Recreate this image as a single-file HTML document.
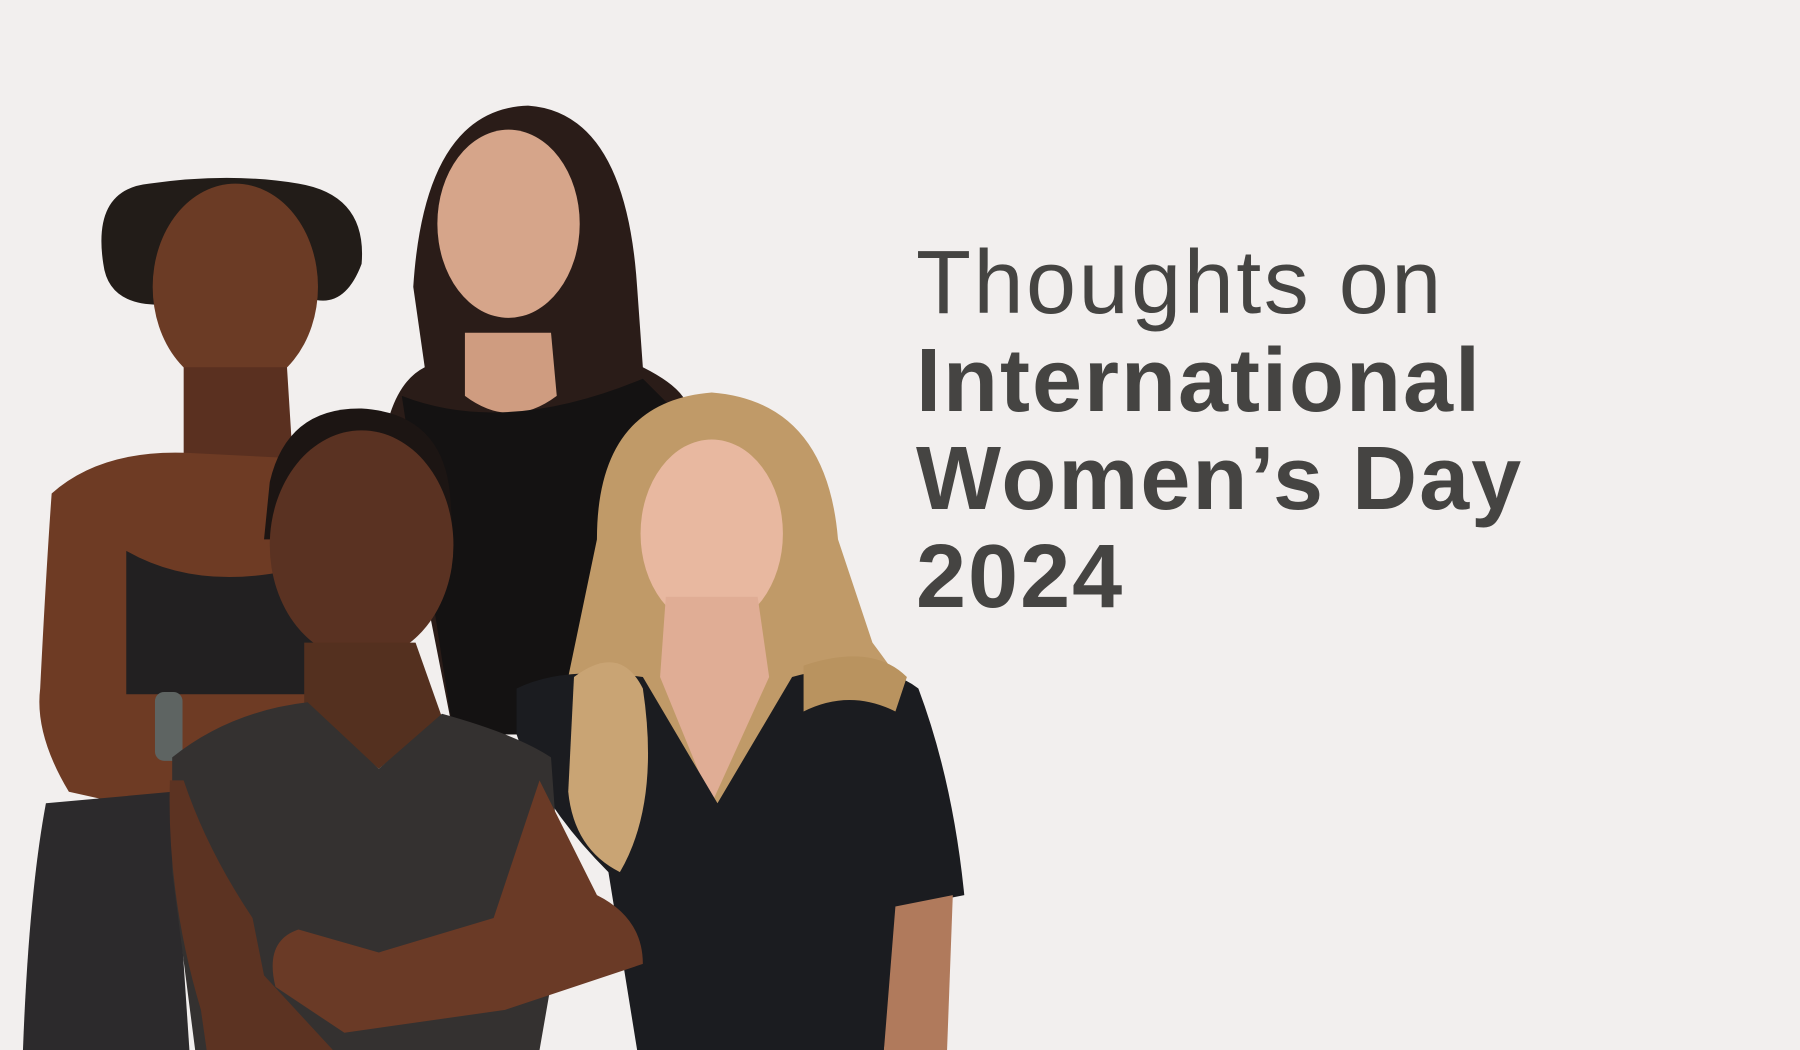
<!DOCTYPE html>
<html><head><meta charset="utf-8"><style>
html,body{margin:0;padding:0;background:#f2efee;}
.wrap{position:relative;width:1800px;height:1050px;overflow:hidden;background:#f2efee;}
svg{position:absolute;left:0;top:0;}
.t{position:absolute;left:916px;top:234px;font-family:"Liberation Sans",sans-serif;color:#454442;font-size:90px;line-height:98px;letter-spacing:2.5px;}
.t .l{font-weight:300;}
.t b{font-weight:700;display:block;letter-spacing:2px;}
</style></head><body><div class="wrap">
<svg width="1800" height="1050" viewBox="0 0 1568 915" preserveAspectRatio="none">
<!-- B back -->
<path d="M360 250 Q370 95 460 92 Q545 98 555 250 L560 320 Q600 340 600 360 L560 640 L395 640 L340 360 Q350 330 370 320 Z" fill="#2a1c18"/>
<ellipse cx="443" cy="195" rx="62" ry="82" fill="#d6a58a"/>
<path d="M405 290 L480 290 L485 345 Q445 375 405 345 Z" fill="#cf9c80"/>
<path d="M350 345 Q440 380 560 330 L590 360 L560 640 L395 640 Z" fill="#141212"/>
<!-- A -->
<path d="M90 230 Q80 165 130 160 Q200 150 260 160 Q320 170 315 230 Q300 270 270 260 L150 265 Q95 270 90 230Z" fill="#221c18"/>
<ellipse cx="205" cy="250" rx="72" ry="90" fill="#6b3b25"/>
<path d="M160 320 L250 320 L255 400 L160 400Z" fill="#5a3020"/>
<path d="M45 430 Q90 390 170 395 L270 400 Q300 430 290 520 L280 700 L150 710 L60 690 Q30 640 35 600 Q40 500 45 430Z" fill="#6e3b24"/>
<path d="M110 480 Q180 520 280 490 L280 605 L110 605Z" fill="#222021"/>
<path d="M40 700 L150 690 L165 915 L20 915 Q25 780 40 700Z" fill="#2c2a2c"/>
<rect x="135" y="603" width="24" height="60" rx="8" fill="#5e6462"/>
<!-- D -->
<path d="M520 470 Q520 350 620 342 Q720 350 730 470 L760 560 Q790 600 800 620 L560 760 Q490 700 495 590 Z" fill="#c09a68"/>
<ellipse cx="620" cy="465" rx="62" ry="82" fill="#e8b8a0"/>
<path d="M580 520 L660 520 L670 590 L620 700 L575 590Z" fill="#e0ad95"/>
<path d="M450 600 Q490 580 560 590 L625 700 L690 590 Q760 570 800 600 Q830 680 840 780 L790 790 L770 915 L555 915 L530 760 Q470 700 450 640Z" fill="#1b1c20"/>
<path d="M500 590 Q540 560 560 600 Q575 700 540 760 Q500 740 495 690Z" fill="#c9a474"/>
<path d="M700 580 Q760 560 790 590 L780 620 Q740 600 700 620Z" fill="#b9935f"/>
<path d="M780 790 L830 780 L825 915 L770 915Z" fill="#b07a5c"/>
<!-- C front -->
<path d="M235 420 Q250 355 315 356 Q385 360 392 430 L395 470 L230 470Z" fill="#1c1513"/>
<ellipse cx="315" cy="475" rx="80" ry="100" fill="#5a3222"/>
<path d="M265 560 L362 560 L385 625 L330 670 L265 615Z" fill="#54301f"/>
<path d="M150 660 Q200 620 268 612 L330 670 L385 622 Q450 640 480 660 L490 800 L470 915 L170 915 L150 760Z" fill="#343130"/>
<path d="M148 680 Q145 780 175 880 L180 915 L290 915 L230 850 L220 800Q180 740 160 680Z" fill="#5c3322"/>
<path d="M470 680 Q500 740 520 780 Q560 800 560 840 L440 880 L300 900 L240 860 Q230 820 260 810 L330 830 L430 800Z" fill="#6a3a26"/>
</svg>
<div class="t"><span class="l">Thoughts on</span><b>International</b><b>Women’s Day</b><b>2024</b></div>
</div></body></html>
